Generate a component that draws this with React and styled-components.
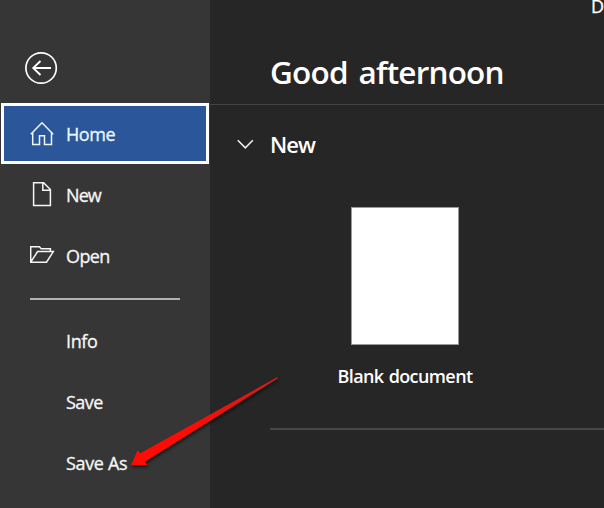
import React from 'react';
import styled, { createGlobalStyle } from 'styled-components';

const GlobalStyle = createGlobalStyle`
  * { box-sizing: border-box; }
  body {
    margin: 0;
    overflow: hidden;
    background: #262626;
    font-family: "Open Sans", "Noto Sans", sans-serif;
    color: #fff;
  }
`;

const Screen = styled.div`
  position: relative;
  display: flex;
  width: 604px;
  height: 508px;
  overflow: hidden;
`;

const Sidebar = styled.nav`
  flex: none;
  width: 210px;
  background: #363636;
  display: flex;
  flex-direction: column;
`;

const BackButton = styled.button`
  width: 34px;
  height: 34px;
  margin: 51px 0 18px 24px;
  padding: 0;
  border: 0;
  background: none;
  color: #fff;
  flex: none;
`;

const NavItem = styled.a`
  flex: none;
  display: flex;
  align-items: center;
  height: 61px;
  margin: 0 1px;
  padding-left: 26px;
  border: 3px solid ${(p) => (p.$active ? '#fff' : 'transparent')};
  background: ${(p) => (p.$active ? '#2b579a' : 'transparent')};
  color: ${(p) => (p.$active ? '#eaf7ff' : '#f6f6f6')};
  font-size: 18px;
  line-height: 24px;
`;

const IconSlot = styled.span`
  width: 36px;
  height: 28px;
  flex: none;
`;

const Label = styled.span`
  letter-spacing: ${(p) => p.$spacing}px;
  white-space: nowrap;
  -webkit-text-stroke: 0.3px currentColor;
`;

const NavDivider = styled.hr`
  flex: none;
  width: 150px;
  height: 2px;
  margin: 12px 0 10px 30px;
  border: 0;
  background: #b1b1b1;
`;

const Main = styled.main`
  flex: 1;
  min-width: 0;
  background: #262626;
  display: flex;
  flex-direction: column;
`;

const AppBar = styled.div`
  flex: none;
  height: 40px;
  padding-left: 381px;
  font-size: 18px;
  line-height: 24px;
  white-space: nowrap;
`;

const AppTitle = styled.div`
  margin-top: -6px;
  -webkit-text-stroke: 0.3px currentColor;
`;

const Greeting = styled.h1`
  flex: none;
  height: 65px;
  margin: 0;
  padding-left: 60px;
  border-bottom: 1px solid #444;
  font-size: 31.5px;
  font-weight: 600;
  line-height: 64px;
  letter-spacing: -0.8px;
  word-spacing: 3.5px;
  white-space: nowrap;
`;

const SectionHeader = styled.div`
  flex: none;
  display: flex;
  align-items: center;
  height: 80px;
  padding-left: 26px;
`;

const ChevronSlot = styled.span`
  width: 34px;
  height: 20px;
  flex: none;
`;

const SectionTitle = styled.h2`
  margin: 0 0 2px;
  font-size: 22px;
  font-weight: 600;
  line-height: 30px;
  letter-spacing: -0.9px;
`;

const Templates = styled.section`
  flex: none;
  height: 245px;
  margin-left: 60px;
  padding: 22px 0 0 55px;
  border-bottom: 2px solid #484848;
`;

const TemplateCard = styled.div`
  width: 160px;
  display: flex;
  flex-direction: column;
  align-items: center;
`;

const Page = styled.div`
  width: 108px;
  height: 138px;
  border: 1px solid #999;
  background: #fff;
`;

const TemplateName = styled.div`
  margin-top: 19px;
  font-size: 18px;
  font-weight: 600;
  line-height: 24px;
  letter-spacing: -0.6px;
  word-spacing: 1px;
  white-space: nowrap;
`;

const Pointer = styled.svg`
  position: absolute;
  left: 120px;
  top: 366px;
  pointer-events: none;
  filter: drop-shadow(1px 2px 1.5px rgba(0, 0, 0, 0.6));
`;

const BackIcon = () => (
  <svg width="34" height="34" viewBox="0 0 34 34" fill="none" stroke="currentColor" strokeWidth="1.7">
    <circle cx="17.1" cy="17" r="15.2" />
    <path d="M27 17H9.5M16.5 10L9.2 17L16.5 24" strokeWidth="1.8" />
  </svg>
);

const HomeIcon = () => (
  <svg width="28" height="28" viewBox="0 0 28 28" fill="none" stroke="currentColor" strokeWidth="1.5">
    <path d="M0.8 14.2L12 2.8L23.2 14.2M2.7 12.4V24.5H9.5V15.8H14.5V24.5H21.5V12.4" />
  </svg>
);

const FileIcon = () => (
  <svg width="28" height="28" viewBox="0 0 28 28" fill="none" stroke="currentColor" strokeWidth="1.5">
    <path d="M3.6 1.7H13.6L20.4 8.5V24.5H3.6ZM12.8 1.7V9.2H20.4" />
  </svg>
);

const FolderIcon = () => (
  <svg width="28" height="28" viewBox="0 0 28 28" fill="none" stroke="currentColor" strokeWidth="1.5">
    <path d="M0.7 20.2V4.7H9.4L11.2 6.7H20.4V9.4M0.7 20.2L7.6 9.6H23.3L16.5 20.2Z" />
  </svg>
);

const ChevronIcon = () => (
  <svg width="20" height="20" viewBox="0 0 20 20" fill="none" stroke="#f2f2f2" strokeWidth="1.5">
    <path d="M1.8 5.3L9.3 12.9L16.8 5.3" />
  </svg>
);

const primaryItems = [
  { label: 'Home', Icon: HomeIcon, active: true, spacing: -0.45 },
  { label: 'New', Icon: FileIcon, spacing: -0.9 },
  { label: 'Open', Icon: FolderIcon, spacing: -0.6 },
];

const fileItems = [
  { label: 'Info', spacing: -0.35 },
  { label: 'Save', spacing: -0.5 },
  { label: 'Save As', spacing: -0.35 },
];

export default function App() {
  return (
    <Screen>
      <GlobalStyle />
      <Sidebar>
        <BackButton aria-label="Back">
          <BackIcon />
        </BackButton>
        {primaryItems.map(({ label, Icon, active, spacing }) => (
          <NavItem key={label} $active={active}>
            <IconSlot>
              <Icon />
            </IconSlot>
            <Label $spacing={spacing}>{label}</Label>
          </NavItem>
        ))}
        <NavDivider />
        {fileItems.map(({ label, spacing }) => (
          <NavItem key={label}>
            <IconSlot />
            <Label $spacing={spacing}>{label}</Label>
          </NavItem>
        ))}
      </Sidebar>
      <Main>
        <AppBar>
          <AppTitle>D</AppTitle>
        </AppBar>
        <Greeting>Good afternoon</Greeting>
        <SectionHeader>
          <ChevronSlot>
            <ChevronIcon />
          </ChevronSlot>
          <SectionTitle>New</SectionTitle>
        </SectionHeader>
        <Templates>
          <TemplateCard>
            <Page />
            <TemplateName>Blank document</TemplateName>
          </TemplateCard>
        </Templates>
      </Main>
      <Pointer width="164" height="110" viewBox="0 0 164 110">
        <defs>
          <linearGradient id="pointerFill" x1="0" y1="1" x2="1" y2="0">
            <stop offset="0.4" stopColor="#ff0a05" />
            <stop offset="1" stopColor="#c9201c" />
          </linearGradient>
        </defs>
        <path
          d="M11 99.3L17.6 84.2L20.3 87.2L157 11.3L158 12.3L25 95.8L27.5 99Z"
          fill="url(#pointerFill)"
        />
      </Pointer>
    </Screen>
  );
}
